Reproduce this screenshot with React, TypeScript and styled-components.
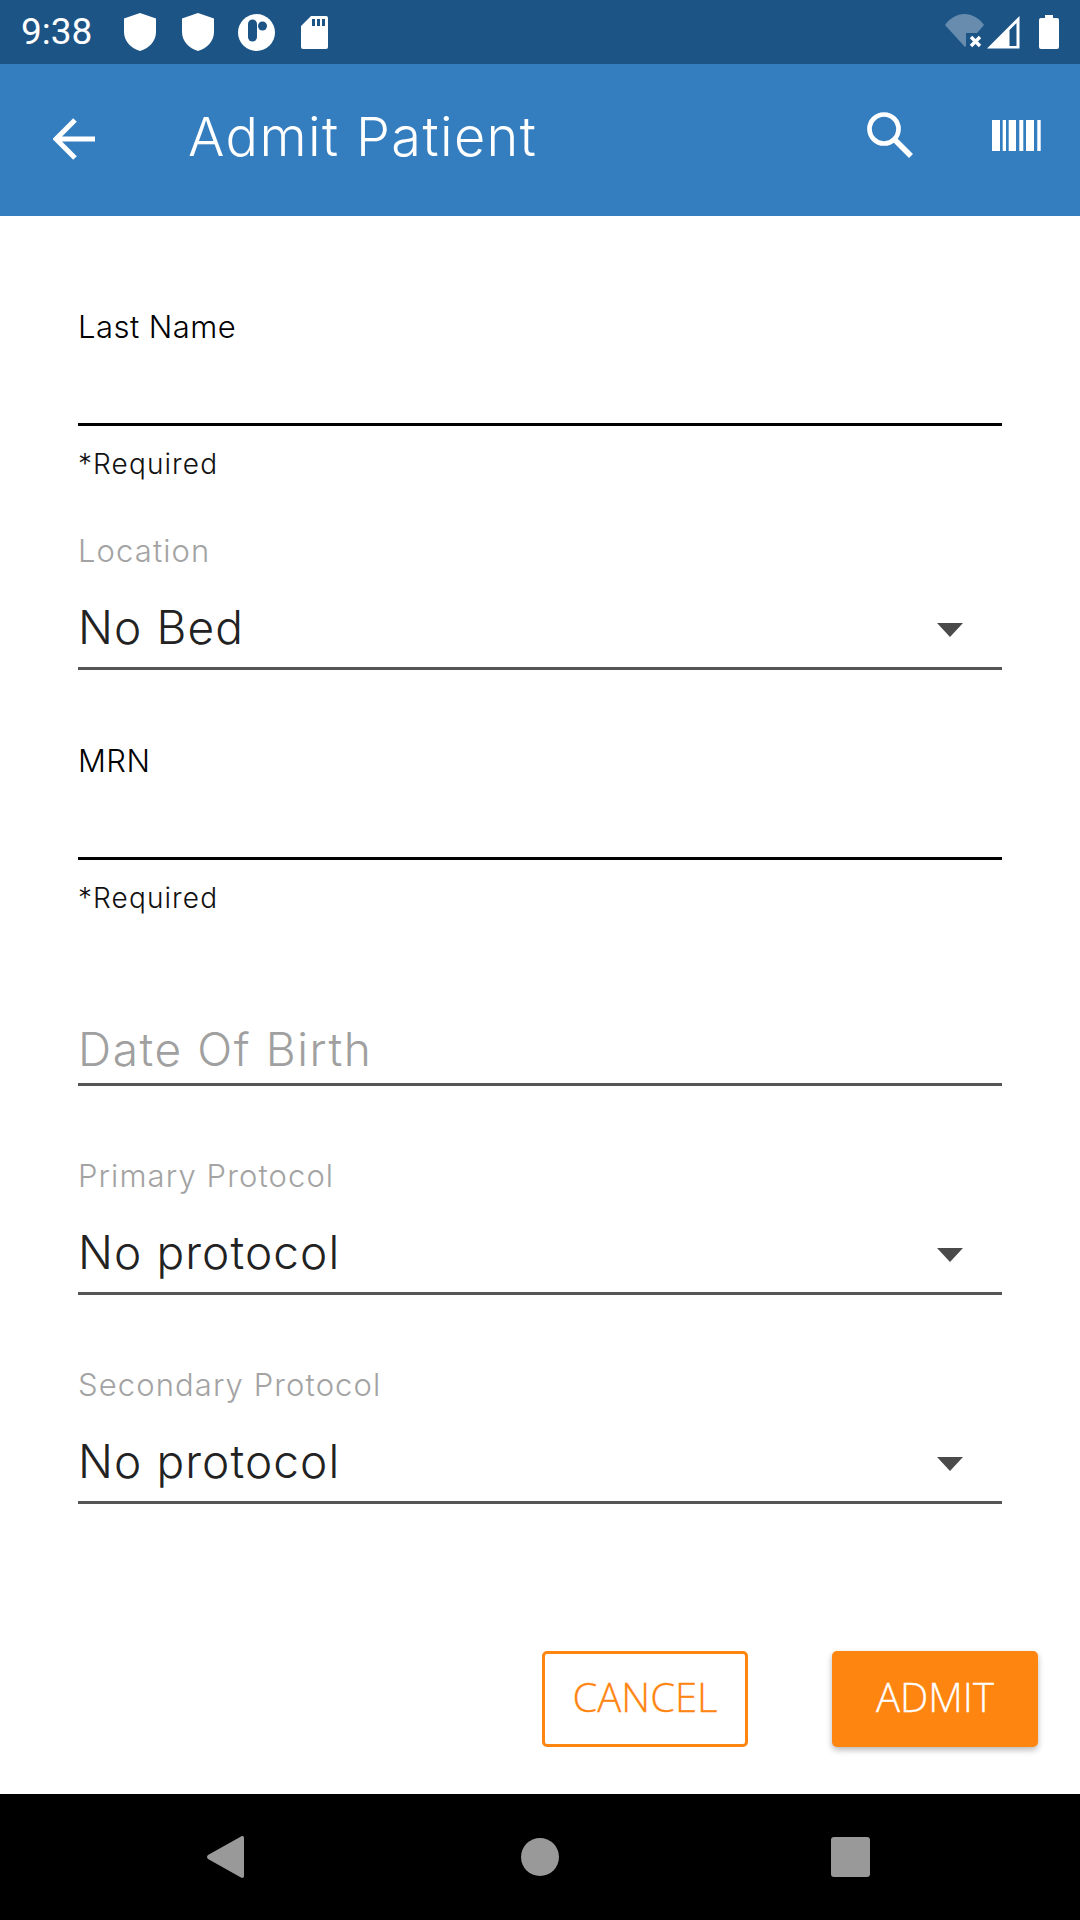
import React from "react";
import styled, { createGlobalStyle } from "styled-components";

const Global = createGlobalStyle`
  html, body { margin: 0; padding: 0; background: #fff; }
  * { box-sizing: border-box; }
`;

const FONT = `Inter, "Noto Sans", sans-serif`;

const Page = styled.div`
  width: 1080px;
  height: 1920px;
  display: flex;
  flex-direction: column;
  background: #fff;
  font-family: ${FONT};
  overflow: hidden;
`;

const StatusBar = styled.div`
  height: 64px;
  flex: none;
  background: #1d5486;
  display: flex;
  align-items: center;
  padding: 0 21px 0 21px;
`;
const Time = styled.span`
  font-family: Roboto, sans-serif;
  font-size: 37px;
  color: #fff;
  width: 103px;
  line-height: 64px;
`;
const StatusLeft = styled.div`
  display: flex;
  align-items: center;
  gap: 26px;
`;
const StatusRight = styled.div`
  margin-left: auto;
  display: flex;
  align-items: center;
`;

const AppBar = styled.header`
  height: 152px;
  flex: none;
  background: #347ec0;
  display: flex;
  align-items: center;
  padding: 0 39px 10px 53px;
`;
const Title = styled.h1`
  margin: 2px 0 0 93px;
  font-size: 54px;
  font-weight: 300;
  color: #fff;
  letter-spacing: 1.4px;
`;
const AppActions = styled.div`
  margin-left: auto;
  display: flex;
  align-items: center;
  gap: 79px;
`;

const Form = styled.main`
  flex: 1;
  display: flex;
  flex-direction: column;
  padding: 90px 78px 0;
`;
const Label = styled.label<{ $muted?: boolean; $gap?: number }>`
  display: block;
  height: 40px;
  line-height: ${(p) => (p.$muted ? 40 : 42)}px;
  font-size: 31px;
  font-weight: 300;
  letter-spacing: ${(p) => (p.$muted ? 1.1 : 0.45)}px;
  color: ${(p) => (p.$muted ? "#a3a3a3" : "#000")};
  margin-top: ${(p) => p.$gap ?? 0}px;
`;
const EmptyInput = styled.div`
  height: 80px;
  border-bottom: 3px solid #000;
`;
const Helper = styled.div`
  margin-top: 18px;
  height: 40px;
  line-height: 40px;
  font-size: 28px;
  font-weight: 300;
  letter-spacing: 1.1px;
  color: #111;
`;
const Select = styled.div`
  height: 99px;
  padding-top: 28px;
  border-bottom: 3px solid #555;
  display: flex;
  align-items: flex-start;
  justify-content: space-between;
  padding-right: 39px;
`;
const Value = styled.span<{ $muted?: boolean }>`
  font-size: 46px;
  line-height: 56px;
  font-weight: 300;
  letter-spacing: ${(p) => (p.$muted ? 1.6 : 1.1)}px;
  color: ${(p) => (p.$muted ? "#a0a0a0" : "#222")};
`;
const Caret = styled.svg`
  width: 26px;
  height: 14px;
  margin-top: 24px;
  fill: #4a4a4a;
`;
const DateField = styled.div`
  height: 65px;
  border-bottom: 3px solid #555;
  margin-top: 103px;
`;
const Actions = styled.div`
  margin-top: auto;
  margin-right: -36px;
  padding-bottom: 47px;
  display: flex;
  justify-content: flex-end;
  gap: 84px;
`;
const Button = styled.button<{ $primary?: boolean }>`
  width: 206px;
  height: 96px;
  font-family: "Open Sans", sans-serif;
  font-size: 40px;
  font-weight: 300;
  padding: 0 0 5px;
  border-radius: 5px;
  border: ${(p) => (p.$primary ? "none" : "3px solid #ff8511")};
  color: ${(p) => (p.$primary ? "#fff" : "#ff8511")};
  background: ${(p) => (p.$primary ? "#ff8511" : "#fff")};
  box-shadow: ${(p) => (p.$primary ? "0 3px 6px rgba(0,0,0,0.28)" : "none")};
  -webkit-text-stroke: 0.3px currentColor;
`;
const NavBar = styled.nav`
  height: 126px;
  flex: none;
  background: #000;
  display: flex;
  align-items: center;
  justify-content: space-between;
  padding: 0 210px 0 207px;
`;
const NavSquare = styled.div`
  width: 39px;
  height: 40px;
  border-radius: 3px;
  background: #999;
`;
const NavCircle = styled.div`
  width: 38px;
  height: 38px;
  margin-left: 5px;
  border-radius: 50%;
  background: #999;
`;
const LogoMark = styled.svg`
  width: 37px;
  height: 37px;
  margin-left: -2px;
`;
const ArrowIcon = styled.svg`
  width: 42px;
  height: 42px;
  margin-top: 8px;
  fill: none;
  stroke: #fff;
  stroke-width: 5;
`;
const BatteryIcon = styled.svg`
  width: 20px;
  height: 34px;
  margin-left: 19px;
  fill: #fff;
`;

const Shield = () => (
  <svg width="32" height="38" viewBox="0 0 32 38" fill="#fff">
    <path d="M16 0L32 5.5V19C32 28 25 35.5 16 38C7 35.5 0 28 0 19V5.5Z" />
  </svg>
);
const Logo = () => (
  <LogoMark viewBox="0 0 37 37">
    <circle cx="18.5" cy="18.5" r="18.5" fill="#fff" />
    <rect x="10" y="5.5" width="9" height="22" rx="4.5" fill="#1d5486" />
    <circle cx="24.5" cy="12" r="4.5" fill="#1d5486" />
  </LogoMark>
);
const SdCard = () => (
  <svg width="27" height="33" viewBox="0 0 27 33" fill="#fff">
    <path fillRule="evenodd" d="M10 0H25a2 2 0 0 1 2 2V31a2 2 0 0 1-2 2H2a2 2 0 0 1-2-2V10ZM11 3v7h3V3ZM16 3v7h3V3ZM21 3v7h3V3Z" />
  </svg>
);
const Wifi = () => (
  <svg width="42" height="36" viewBox="0 0 42 36">
    <path d="M0 11C5 4 12 0 19.500 0S34 4 39 11L20 33Z" fill="#fff" opacity="0.33" />
    <path d="M21 19h21v17H21Z" fill="#1d5486" />
    <path d="M26 23l9 9M35 23l-9 9" stroke="#fff" strokeWidth="3.4" fill="none" />
  </svg>
);
const Signal = () => (
  <svg width="33" height="33" viewBox="0 0 33 33">
    <path d="M32.500 0V32.500H0ZM29.500 7L22.500 14V30H29.500Z" fill="#fff" fillRule="evenodd" />
  </svg>
);
const Battery = () => (
  <BatteryIcon viewBox="0 0 20 34">
    <path d="M6 0H14V3H18a2 2 0 0 1 2 2V32a2 2 0 0 1-2 2H2a2 2 0 0 1-2-2V5a2 2 0 0 1 2-2H6Z" />
  </BatteryIcon>
);
const BackArrow = () => (
  <ArrowIcon viewBox="0 0 42 42">
    <path d="M42 21H4M22 2L3 21L22 40" />
  </ArrowIcon>
);
const Search = () => (
  <svg width="46" height="46" viewBox="0 0 46 46" fill="none" stroke="#fff" strokeWidth="4.700">
    <circle cx="17" cy="17" r="14.500" />
    <path d="M27.500 27.500L44 44" strokeWidth="5.500" />
  </svg>
);
const Barcode = () => (
  <svg width="49" height="31" viewBox="0 0 49 31" fill="#fff">
    <path d="M0 0h8v31H0ZM10.700 0h3.300v31h-3.300ZM16.700 0h7.300v31h-7.300ZM27.300 0h4v31h-4ZM34 0h8v31h-8ZM45.300 0h3.400v31h-3.400Z" />
  </svg>
);
const NavBack = () => (
  <svg width="37" height="42" viewBox="0 0 37 42" fill="#999">
    <path d="M37 2V40C37 42 35 42.500 34 41.500L1 23C-.3 22 -.3 20 1 19L34 .5C35-.5 37 0 37 2Z" />
  </svg>
);

function SelectField({ label, value, gap }: { label: string; value: string; gap: number }) {
  return (
    <>
      <Label $muted $gap={gap}>{label}</Label>
      <Select>
        <Value>{value}</Value>
        <Caret viewBox="0 0 26 14"><path d="M0 0H26L13 14Z" /></Caret>
      </Select>
    </>
  );
}
function RequiredField({ label, gap }: { label: string; gap: number }) {
  return (
    <>
      <Label $gap={gap}>{label}</Label>
      <EmptyInput />
      <Helper>*Required</Helper>
    </>
  );
}

export default function App() {
  return (
    <Page>
      <Global />
      <StatusBar>
        <Time>9:38</Time>
        <StatusLeft>
          <Shield />
          <Shield />
          <Logo />
          <SdCard />
        </StatusLeft>
        <StatusRight>
          <Wifi />
          <Signal />
          <Battery />
        </StatusRight>
      </StatusBar>
      <AppBar>
        <BackArrow />
        <Title>Admit Patient</Title>
        <AppActions>
          <Search />
          <Barcode />
        </AppActions>
      </AppBar>
      <Form>
        <RequiredField label="Last Name" gap={0} />
        <SelectField label="Location" value="No Bed" gap={47} />
        <RequiredField label="MRN" gap={70} />
        <DateField><Value $muted>Date Of Birth</Value></DateField>
        <SelectField label="Primary Protocol" value="No protocol" gap={70} />
        <SelectField label="Secondary Protocol" value="No protocol" gap={70} />
        <Actions>
          <Button>CANCEL</Button>
          <Button $primary>ADMIT</Button>
        </Actions>
      </Form>
      <NavBar>
        <NavBack />
        <NavCircle />
        <NavSquare />
      </NavBar>
    </Page>
  );
}
